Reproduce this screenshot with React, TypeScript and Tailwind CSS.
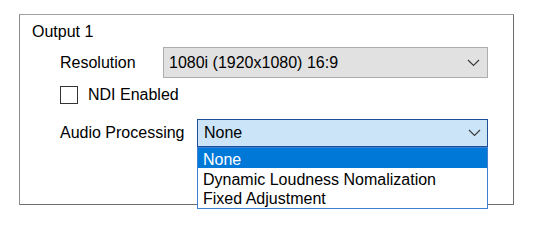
import React from "react";

function Chevron() {
  return (
    <svg width="13" height="8" viewBox="0 0 13 8" className="shrink-0">
      <polyline points="1,1 6.5,6.5 12,1" fill="none" stroke="#3c3c3c" strokeWidth="1.2" />
    </svg>
  );
}

export default function App() {
  return (
    <div
      className="w-[541px] h-[234px] bg-white pt-[14px] pl-[19px] text-black text-[16px] leading-[20px]"
      style={{ fontFamily: '"Liberation Sans", Arial, sans-serif' }}
    >
      <div className="relative w-[495px] h-[191px] border border-t-[#a0a0a0] border-l-[#8c8c8c] border-r-[#6e6e6e] border-b-[#6e6e6e] pt-[7px]">
        <div className="pl-[12px] h-[20px]">Output 1</div>

        <div className="mt-[5px] pl-[40px] flex items-center h-[31px]">
          <div className="w-[103px]">Resolution</div>
          <div className="w-[325px] h-[31px] bg-[#e1e1e1] border border-[#adadad] flex items-center pl-[5px] pr-[7px]">
            <span className="flex-1">1080i (1920x1080) 16:9</span>
            <Chevron />
          </div>
        </div>

        <div className="mt-[7px] pl-[40px] flex items-center h-[20px]">
          <div className="w-[18px] h-[18px] border border-[#333333] bg-white" />
          <span className="ml-[10px]">NDI Enabled</span>
        </div>

        <div className="mt-[14px] pl-[40px] flex items-center h-[28px]">
          <div className="w-[137px]">Audio Processing</div>
          <div className="relative w-[291px] h-[28px]">
            <div className="w-full h-full bg-[#cce4f7] border border-[#1f4e98] flex items-center pl-[6px] pr-[6px]">
              <span className="flex-1">None</span>
              <Chevron />
            </div>
            <div className="absolute left-0 top-[28px] w-[291px] h-[62px] bg-white border border-[#3f7fd2] z-10">
              <div className="h-[20px] bg-[#0078d7] text-white pl-[5px] leading-[24px]">None</div>
              <div className="h-[20px] pl-[5px] leading-[24px]">Dynamic Loudness Nomalization</div>
              <div className="h-[20px] pl-[5px] leading-[22px]">Fixed Adjustment</div>
            </div>
          </div>
        </div>
      </div>
    </div>
  );
}
